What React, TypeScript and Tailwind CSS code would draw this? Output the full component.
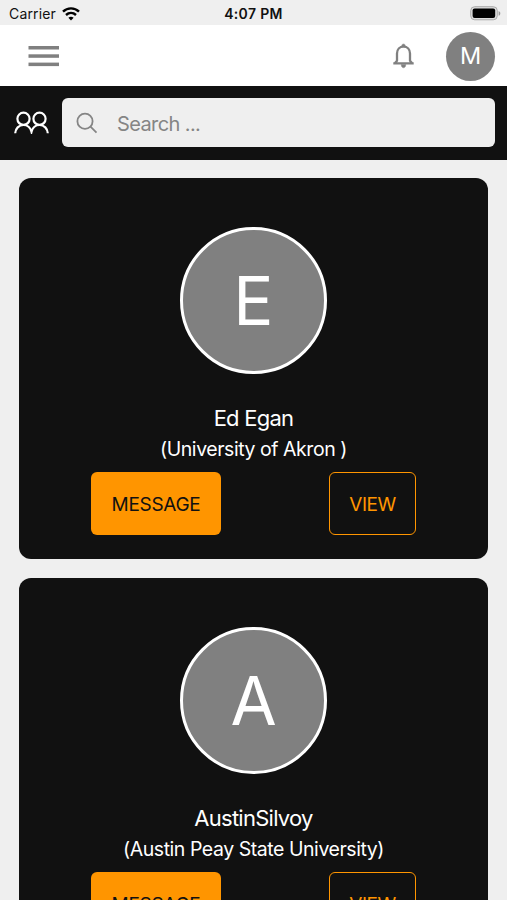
type Person = {
  initial: string
  name: string
  school: string
}

const people: Person[] = [
  { initial: 'E', name: 'Ed Egan', school: '(University of Akron )' },
  { initial: 'A', name: 'AustinSilvoy', school: '(Austin Peay State University)' }
]

function WifiIcon() {
  return (
    <svg className="ml-[6px] h-[14px] w-[18px]" viewBox="0 0 18 14" fill="none">
      <path
        d="M1 4.6C5.4 .3 12.6 .3 17 4.6M4 8c2.9-2.7 7.1-2.7 10 0"
        stroke="#000"
        strokeWidth="2.4"
      />
      <path d="M9 13.4l-2.6-2.7c1.5-1.3 3.7-1.3 5.2 0z" fill="#000" />
    </svg>
  )
}

function BatteryIcon() {
  return (
    <svg className="h-[15px] w-[31px]" viewBox="0 0 31 15" fill="none">
      <rect x=".7" y=".7" width="26.6" height="13.1" rx="4" fill="#ddd" stroke="#aaa" />
      <rect x="2.6" y="2.6" width="22.6" height="9.5" rx="2" fill="#000" />
      <path d="M28.6 5v4.8c1-.4 1.7-1.3 1.7-2.4S29.6 5.4 28.6 5z" fill="#999" />
    </svg>
  )
}

function StatusBar() {
  return (
    <div className="grid h-[25px] grid-cols-3 items-center bg-[#efefef] pt-[2px] text-[#111]">
      <div className="flex items-center pl-[9px]">
        <span className="text-[14px] tracking-[0.15px]">Carrier</span>
        <WifiIcon />
      </div>
      <span className="text-center text-[14px] font-semibold tracking-[0.35px]">
        4:07 PM
      </span>
      <div className="flex justify-end pr-[6px]">
        <BatteryIcon />
      </div>
    </div>
  )
}

function Header() {
  return (
    <header className="flex h-[61px] items-center bg-white pt-px pr-[12px] pl-[28px]">
      <button className="w-[31px]" aria-label="Menu">
        <svg className="block h-[21px] w-[31px]" viewBox="0 0 31 21" fill="#808080">
          <rect x=".5" y="0" width="30.5" height="3.5" />
          <rect x=".5" y="8.3" width="30.5" height="3.5" />
          <rect x=".5" y="16.6" width="30.5" height="3.5" />
        </svg>
      </button>
      <svg
        className="ml-auto h-[26px] w-[22px]"
        viewBox="0 0 22 26"
        fill="none"
        stroke="#808080"
        strokeWidth="2.3"
        strokeLinejoin="round"
      >
        <path d="M.3 20.4h20.4M1.8 20.2l2.2-2.400v-7.200c0-4.200 2.700-7 6.500-7s6.500 2.800 6.500 7v7.200l2.200 2.400" />
        <path
          d="M8.5 3.500a2 2.600 0 0 1 4 0zM8.200 21.500h4.600c0 4.400-4.600 4.400-4.600 0z"
          fill="#808080"
          strokeWidth=".4"
        />
      </svg>
      <div className="ml-[31px] flex size-[49px] items-center justify-center rounded-full bg-[#808080] text-[23.5px] text-white">
        M
      </div>
    </header>
  )
}

function SearchBar() {
  return (
    <div className="flex h-[74px] items-center bg-[#111] pr-[12px] pb-px pl-[14px]">
      <svg
        className="h-[23px] w-[35px]"
        viewBox="0 0 35 23"
        fill="none"
        stroke="#fff"
        strokeWidth="2.2"
      >
        <circle cx="9.5" cy="7.8" r="6.1" />
        <circle cx="25.5" cy="7.8" r="6.1" />
        <path d="M1.2 22.300c.3-4.700 3.600-8.300 8.200-8.300 3.900 0 7 2.600 8.100 6.800 1.100-4.200 4.200-6.800 8.100-6.800 4.600 0 7.900 3.600 8.200 8.300" />
      </svg>
      <div className="ml-[13px] flex h-[49px] flex-1 items-center rounded-[6px] bg-[#efefef] pl-[14px]">
        <svg
          className="size-[22px]"
          viewBox="0 0 22 22"
          fill="none"
          stroke="#858585"
          strokeWidth="1.8"
        >
          <circle cx="9" cy="9.2" r="7.6" />
          <path d="M14.5 14.7l6 6" />
        </svg>
        <span className="ml-[19px] pt-[2px] text-[20px] tracking-[-0.6px] text-[#858585]">
          Search ...
        </span>
      </div>
    </div>
  )
}

function PersonCard({ person }: { person: Person }) {
  return (
    <article className="flex h-[381px] shrink-0 flex-col items-center rounded-[12px] bg-[#111] pt-[49px] text-white">
      <div className="flex size-[147px] items-center justify-center rounded-full border-3 border-white bg-[#808080] text-[67px] leading-none">
        {person.initial}
      </div>
      <h2 className="mt-[29px] text-[22px] leading-[30px] tracking-[-0.75px]">
        {person.name}
      </h2>
      <p className="mt-[2px] text-[19.5px] leading-[28px] tracking-[-0.45px]">
        {person.school}
      </p>
      <div className="mt-[9px] flex w-[325px] justify-between text-[19px]">
        <button className="h-[63px] w-[130px] rounded-[6px] bg-[#ff9500] pt-[3px] tracking-[-0.3px] text-[#111]">
          MESSAGE
        </button>
        <button className="h-[63px] w-[87px] rounded-[6px] border border-[#ff9500] pt-[3px] tracking-[-0.5px] text-[#ff9500]">
          VIEW
        </button>
      </div>
    </article>
  )
}

export default function App() {
  return (
    <div className="h-[900px] w-[507px] overflow-hidden bg-[#efefef] font-['Inter','Liberation_Sans',sans-serif]">
      <StatusBar />
      <Header />
      <SearchBar />
      <main className="flex flex-col gap-[19px] px-[19px] pt-[18px]">
        {people.map(person => (
          <PersonCard key={person.name} person={person} />
        ))}
      </main>
    </div>
  )
}
